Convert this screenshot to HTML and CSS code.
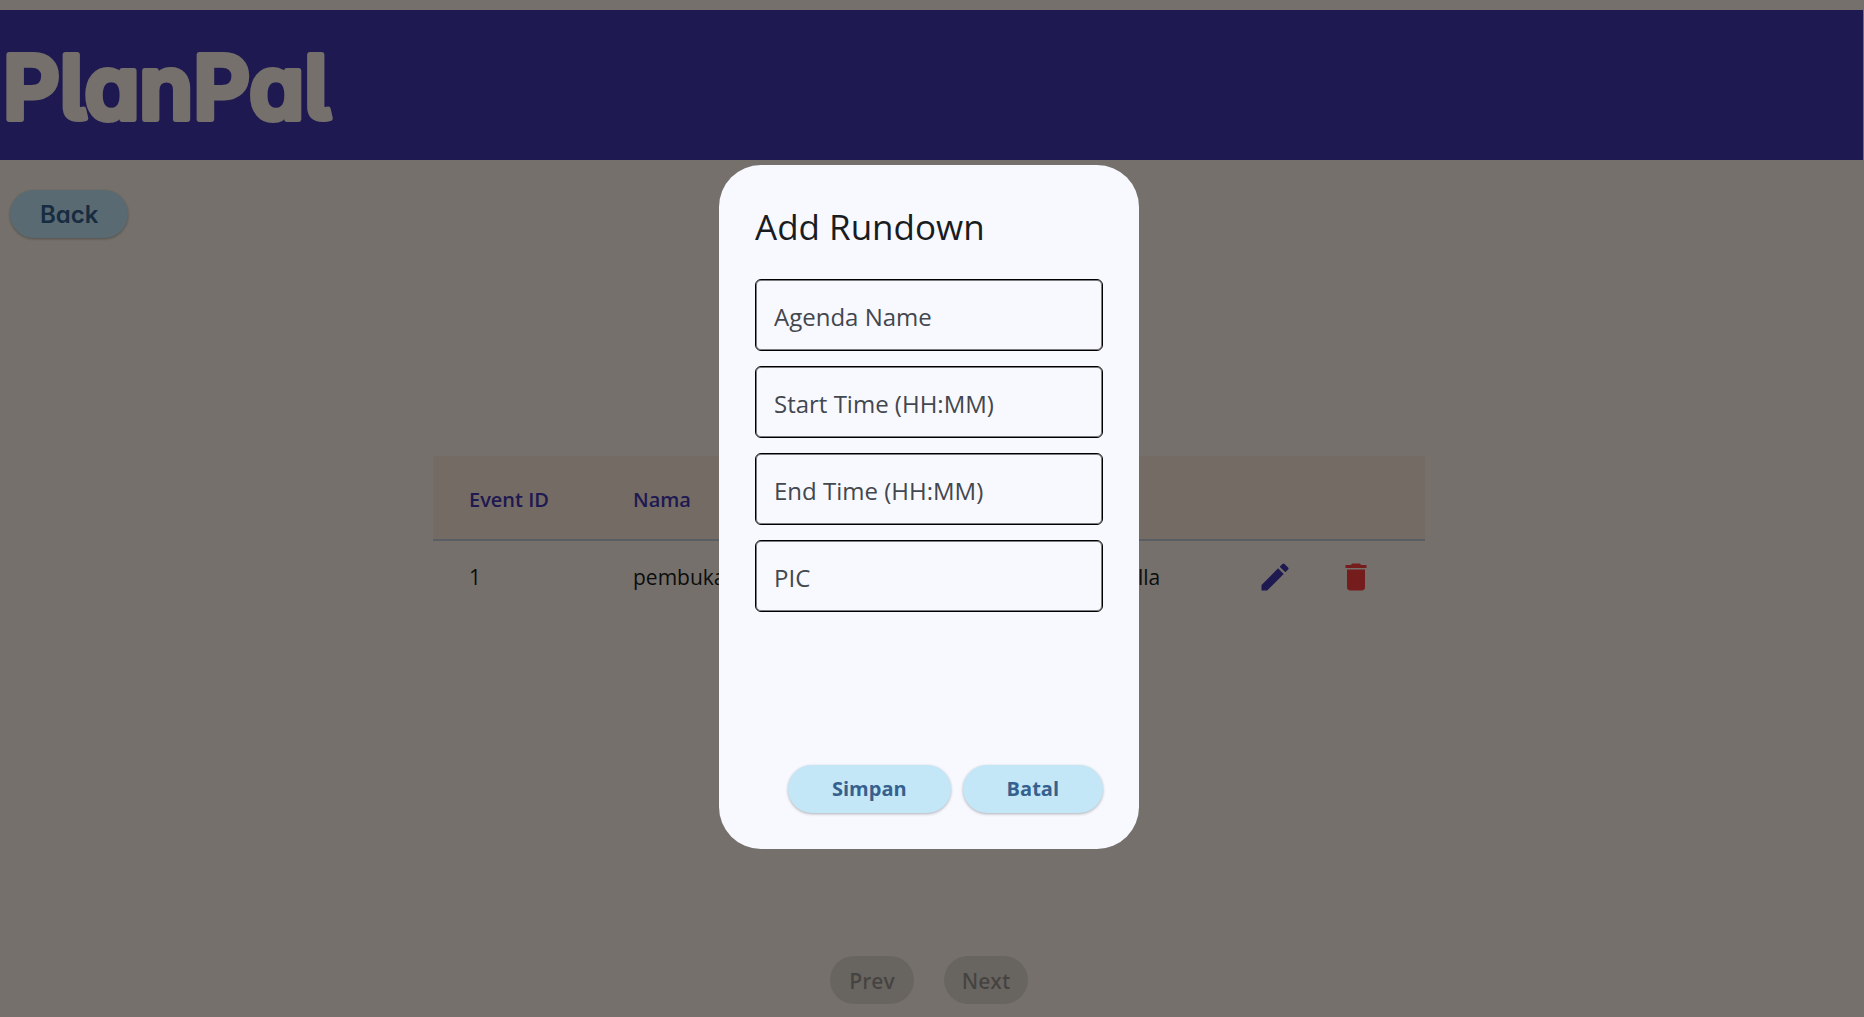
FILE: index.html
```html
<!DOCTYPE html>
<html lang="id">
<head>
  <meta charset="utf-8">
  <meta name="viewport" content="width=device-width, initial-scale=1">
  <title>PlanPal</title>
  <link rel="stylesheet" href="styles.css">
</head>
<body>
  <div class="page">
    <header class="topbar">
      <h1 class="logo">
        <svg class="logo-art" width="380" height="110" aria-label="PlanPal" role="img">
          <text class="logo-text" x="3" y="89">PlanPal</text>
        </svg>
      </h1>
    </header>

    <main class="content">
      <button class="btn btn-back" type="button">Back</button>

      <div class="table-area">
        <table class="rundown">
          <colgroup>
            <col class="col-text"><col class="col-text"><col class="col-text">
            <col class="col-short"><col class="col-short"><col class="col-actions">
          </colgroup>
          <thead>
            <tr>
              <th scope="col">Event ID</th>
              <th scope="col">Nama</th>
              <th scope="col">Start</th>
              <th scope="col">End</th>
              <th scope="col">PIC</th>
              <td></td>
            </tr>
          </thead>
          <tbody>
            <tr>
              <td>1</td>
              <td>pembukaan</td>
              <td>08:00</td>
              <td>09:00</td>
              <td>Adella</td>
              <td>
                <div class="actions">
                  <button class="icon-btn icon-edit" type="button" aria-label="Edit">
                    <svg viewBox="0 0 24 24" width="36" height="36"><path d="M3 17.25V21h3.75L17.81 9.94l-3.75-3.75L3 17.25zM20.71 7.04a1 1 0 0 0 0-1.41l-2.34-2.34a1 1 0 0 0-1.41 0l-1.83 1.83 3.75 3.75 1.83-1.83z"/></svg>
                  </button>
                  <button class="icon-btn icon-delete" type="button" aria-label="Delete">
                    <svg viewBox="0 0 24 24" width="36" height="36"><path d="M6 19c0 1.100.9 2 2 2h8c1.100 0 2-.9 2-2V7H6v12zM19 4h-3.500l-1-1h-5l-1 1H5v2h14V4z"/></svg>
                  </button>
                </div>
              </td>
            </tr>
          </tbody>
        </table>
      </div>

      <nav class="pager" aria-label="Pagination">
        <button class="btn btn-page" type="button" disabled>Prev</button>
        <button class="btn btn-page" type="button" disabled>Next</button>
      </nav>
    </main>
  </div>

  <div class="scrim">
    <dialog class="dialog" open aria-labelledby="dialog-title">
      <h2 class="dialog-title" id="dialog-title">Add Rundown</h2>
      <form class="form">
        <input class="field" type="text" name="agenda" placeholder="Agenda Name" aria-label="Agenda Name">
        <input class="field" type="text" name="start" placeholder="Start Time (HH:MM)" aria-label="Start Time (HH:MM)">
        <input class="field" type="text" name="end" placeholder="End Time (HH:MM)" aria-label="End Time (HH:MM)">
        <input class="field" type="text" name="pic" placeholder="PIC" aria-label="PIC">
        <div class="dialog-actions">
          <button class="btn btn-dialog" type="button">Simpan</button>
          <button class="btn btn-dialog" type="button">Batal</button>
        </div>
      </form>
    </dialog>
  </div>
</body>
</html>
```

FILE: styles.css
```css
:root {
  --cream: #fff5e9;
  --indigo: #4438b0;
  --sky: #c4e7f8;
  --primary: #36618e;
  --ink: #191c20;
  --surface: #f8f9ff;
}

* {
  box-sizing: border-box;
}

body {
  margin: 0;
  background: var(--cream);
  color: var(--ink);
  font-family: "Open Sans", "Noto Sans", sans-serif;
  font-size: 21px;
}

.page {
  display: flex;
  flex-direction: column;
  min-height: 100vh;
  padding-top: 10px;
}

.topbar {
  display: flex;
  align-items: center;
  height: 150px;
  margin-right: 1px;
  background: var(--indigo);
}

.logo {
  margin: 0;
  line-height: 1;
}

.logo-art {
  display: block;
}

.logo-text {
  font-family: Inter, sans-serif;
  font-size: 88px;
  font-weight: 600;
  font-feature-settings: "cv11", "cv05";
  font-variation-settings: "opsz" 14;
  fill: var(--cream);
  stroke: var(--cream);
  stroke-width: 6px;
  stroke-linejoin: round;
}

.content {
  display: flex;
  flex: 1;
  flex-direction: column;
  padding: 30px 6px 13px 0;
}

.btn {
  height: 48px;
  border: 0;
  border-radius: 24px;
  background: var(--sky);
  color: var(--primary);
  font: inherit;
  font-weight: 700;
  box-shadow: 0 1px 3px rgba(0, 0, 0, 0.3);
}

.btn-back {
  align-self: flex-start;
  margin-left: 10px;
  padding: 0 30px;
  font-family: Inter, sans-serif;
  font-size: 24px;
  font-weight: 600;
  font-feature-settings: "cv11";
}

.table-area {
  flex: 1;
  padding-top: 218px;
}

.rundown {
  width: 992px;
  max-width: 100%;
  margin: 0 auto;
  border-collapse: separate;
  border-spacing: 0;
  table-layout: fixed;
}

.col-text {
  width: 164px;
}

.col-short {
  width: 139px;
}

.rundown th,
.rundown td {
  padding: 0 0 0 36px;
  text-align: left;
  white-space: nowrap;
}

.rundown thead th,
.rundown thead td {
  height: 85px;
  padding-top: 4px;
  border-bottom: 2px solid #c3cddb;
  background: #fde9db;
  color: var(--indigo);
  font-size: 20px;
  font-weight: 600;
}

.rundown tbody td {
  height: 72px;
}

.actions {
  display: flex;
  gap: 9px;
}

.icon-btn {
  display: grid;
  place-items: center;
  width: 72px;
  height: 72px;
  padding: 0;
  border: 0;
  background: none;
  fill: currentColor;
}

.icon-edit {
  color: var(--indigo);
}

.icon-delete {
  color: #ff4040;
}

.pager {
  display: flex;
  justify-content: center;
  gap: 30px;
}

.btn-page {
  width: 84px;
  padding: 2px 0 0;
  background: rgba(25, 28, 32, 0.12);
  color: rgba(25, 28, 32, 0.38);
  font-weight: 600;
  box-shadow: none;
}

.scrim {
  position: fixed;
  inset: 0;
  display: grid;
  place-items: center;
  padding: 0 6px 4px 0;
  background: rgba(0, 0, 0, 0.54);
}

.dialog {
  position: static;
  display: flex;
  flex-direction: column;
  gap: 26px;
  width: 420px;
  min-height: 684px;
  margin: 0;
  padding: 36px;
  border: 0;
  border-radius: 42px;
  background: var(--surface);
  color: var(--ink);
}

.dialog-title {
  margin: 0;
  font-size: 35px;
  font-weight: 400;
  line-height: 52px;
}

.form {
  display: flex;
  flex: 1;
  flex-direction: column;
  gap: 15px;
}

.field {
  width: 100%;
  height: 72px;
  padding: 4px 18px 0;
  border: 1px solid #000;
  border-radius: 6px;
  background: transparent;
  box-shadow: inset 0 0 0 1px rgba(0, 0, 0, 0.5);
  color: var(--ink);
  font: inherit;
  font-size: 24px;
}

.field::placeholder {
  color: #43474e;
  opacity: 1;
}

.dialog-actions {
  display: flex;
  justify-content: flex-end;
  gap: 12px;
  margin-top: auto;
}

.btn-dialog {
  padding: 0 44px;
  font-size: 20px;
}
```
